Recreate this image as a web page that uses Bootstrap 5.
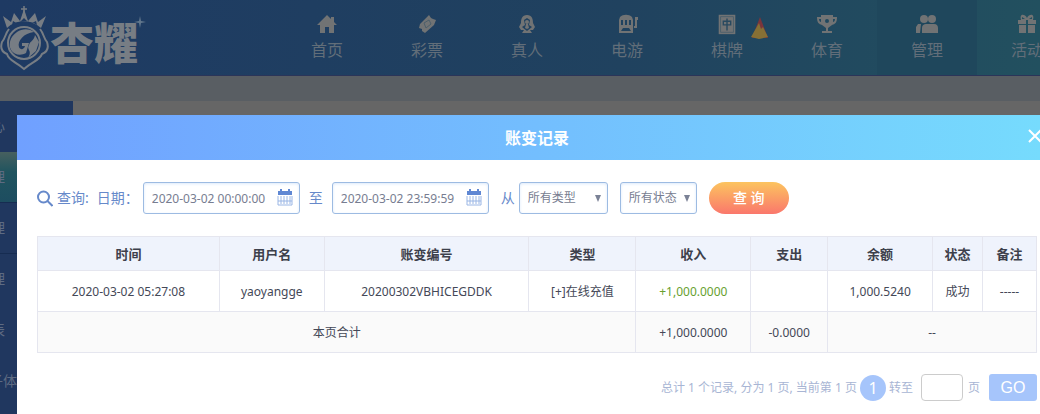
<!DOCTYPE html>
<html lang="zh-CN">
<head>
<meta charset="utf-8">
<meta name="viewport" content="width=device-width, initial-scale=1">
<title>账变记录</title>
<link href="https://cdn.jsdelivr.net/npm/bootstrap@5.3.0/dist/css/bootstrap.min.css" rel="stylesheet">
<style>
body{font-family:"Noto Sans","Noto Sans CJK SC",sans-serif;font-size:12px;line-height:20px;background:#666;color:#444857;min-height:100vh;overflow:hidden}
.site-head{height:76px;background:linear-gradient(90deg,#1e3a63,#20425f 60%,#22505f);border-bottom:1px solid #2b3559;overflow:hidden}
.brand{color:#777d84;width:277px;height:76px;text-decoration:none}
.brand .emblem{width:50px;height:68px;margin-top:4px}
.brand .spark{width:12px;height:12px;margin:16px 0 0 -4px}
.brand-name{font:900 44px/48px "Noto Sans CJK SC",sans-serif;margin-top:17px}
.site-nav{height:76px}
.site-nav a{width:100px;padding-top:13px;color:#626e79;font-size:16px;line-height:24px;text-decoration:none;position:relative}
.site-nav a.current{background:#1f475c}
.site-nav svg{width:24px;height:22px;fill:#717374;margin-bottom:3px}
.site-nav svg.flame{position:absolute;left:74px;top:17px;width:18px}
.strip{height:25px;background:#595e63}
.side{width:73px;background:#20375f;color:#5e6b82;font-size:14px}
.side a{height:51px;width:73px;color:inherit;text-decoration:none;border-bottom:1px solid #162c51;overflow:hidden}
.side a span{width:41px;margin-left:-36px;white-space:nowrap;text-align:right}
.side a.current{background:linear-gradient(#47605f,#20545f 40%,#1d4d60)}
.side a.plain{border-color:transparent}
.side a.wide span{width:53px}
.dialog-layer{position:absolute;inset:115px 0 0 17px;overflow:hidden}
.dialog-box{width:calc(100% + 17px);min-height:100%;background:#fff}
.dialog-head{height:45px;background:linear-gradient(90deg,#70a0ff,#76dcfd);color:#fff;position:relative}
.dialog-head h1{font-size:16px;line-height:24px;font-weight:700}
.dialog-head button{position:absolute;right:15px;top:14px;width:14px;height:14px;padding:0;border:0;background:none;line-height:0}
.query{padding:22px 20px 0;color:#6689ca;font-size:14px;height:76px}
.field{height:32px;border:1px solid #9dbbe2;border-radius:3px;background:#fff;box-shadow:inset 0 1px 3px #dceafb;color:#777d91}
.field input,.field select{border:0;background:none;color:inherit;font-size:12px;outline:0;appearance:none;padding:0 8px;height:30px}
.date-field{width:157px}
.date-field input{width:133px;padding-right:0}
.date-field svg{margin-bottom:2px}
.joint{margin:0 9px}
.pick select{width:100%}
.pick{position:relative}
.pick svg{position:absolute;right:6px;top:12px;pointer-events:none}
.type-pick{width:89px}.state-pick{width:77px}
.query .go-query{width:80px;height:32px;border:0;border-radius:16px;background:linear-gradient(#fcc45f,#fa776c);color:#fff;font-size:14px;font-weight:500;padding:0;white-space:pre}
.far{margin-left:12px}
.records{width:calc(100% - 40px);margin:0 20px;table-layout:fixed;border-collapse:collapse;text-align:center}
.records th,.records td{border:1px solid #e5e6ef;padding:2px 0 0;height:41px}
.records th{height:34px;font-size:13px;background:#eff3fc;color:#3d404b;font-weight:700;padding:0}
.records tfoot td{background:#fafafa}
.records .gain{color:#689f2f}
.pager{padding:21px 20px 12px;color:#a8b5d4}
.pager .page-now{width:26px;height:26px;margin:0 3px;border-radius:50%;background:#a6c5fb;color:#fff;font-size:16px;text-decoration:none}
.pager .unit{margin:0 9px 0 5px}
.pager input{width:42px;height:27px;border:1px solid #ccc;border-radius:4px;padding:0 4px}
.pager button{width:48px;height:27px;border:0;border-radius:3px;background:#a6c5fb;color:#fff;font:16px/20px "Liberation Sans",sans-serif;padding:0}
</style>
</head>
<body class="d-flex flex-column">
<header class="site-head d-flex">
  <a href="#" class="brand d-flex flex-shrink-0 align-items-start">
    <svg class="emblem" viewBox="0 0 50 68" fill="none" stroke="currentColor" stroke-width="2">
      <path d="M7 24 3 12l8 6 3-9 6 8 4-12 4 12 7-8 3 9 8-6-5 12c-10-9-25-9-34 0z" fill="currentColor" stroke="none"/>
      <path d="m12 21 1-4 5 3 6-6 6 6 6-3 1 4c-8-5-17-5-25 0z" fill="#1e3a63" stroke="none"/>
      <path d="M24 2v9m-3-6h6" stroke-width="1.5"/>
      <path d="M9 25c-4 5-3 8-7 13-2 6 0 10 5 12 2 7 8 7 17 15 9-8 15-8 18-15 5-2 7-6 5-12-4-5-3-8-7-13"/>
      <circle cx="24" cy="39" r="16" stroke-width="2"/>
      <path d="M34 28c-6-4-12-3-17 0-7 5-9 12-6 18 3 5 10 6 15 3l3-10h-7v3h3c-1 4-5 4-6 1-2-6 5-14 15-15z" fill="currentColor" stroke="none"/>
      <path d="m35 31 4 7-3 9-8 7c5-8-2-8 1-13 1-4 5-4 6-10z" fill="currentColor" stroke="none"/>
    </svg>
    <span class="brand-name">杏耀</span>
    <svg class="spark" viewBox="0 0 12 12"><path d="m6 0 1 5 5 1-5 1-1 5-1-5-5-1 5-1z" fill="#62778c"/></svg>
  </a>
  <nav class="site-nav d-flex flex-shrink-0 text-center">
    <a href="#" class="d-flex flex-column align-items-center"><svg viewBox="0 0 24 22"><path d="M12 2 2 12h3v8h5v-6h4v6h5v-8h3l-3-3V4h-3v2z"/></svg>首页</a>
    <a href="#" class="d-flex flex-column align-items-center"><svg viewBox="0 0 24 22"><path d="m14 2 2 3 2 1 3 1-2 5-9 8-3-2v-2l-3-1 1-4z"/><path d="m9 10 5-3 2 4-5 4z" fill="none" stroke="#4c5f6b"/></svg>彩票</a>
    <a href="#" class="d-flex flex-column align-items-center"><svg viewBox="0 0 24 22"><path d="M12 2c-5 0-6 4-6 8l-2 4 2 3h3l-2 3h10l-2-3h3l2-3-2-4c0-4-1-8-6-8zm0 3 3 2-1 5 3 2-5 4-5-4 3-2-1-5z" fill-rule="evenodd"/><circle cx="12" cy="9" r="2"/><path d="m11 11-1 4 2 1 2-1-1-4z"/></svg>真人</a>
    <a href="#" class="d-flex flex-column align-items-center"><svg viewBox="0 0 24 22"><path d="M5 4c3-3 9-3 12 0l1 3v13H4V7zm1 3v5h10V7zm2 8-2 3h10l-2-3z" fill-rule="evenodd"/><path d="M8 7h2v5H8zm4 0h2v5h-2zm8-3h3v3h-1v8h-3v-2h1z"/></svg>电游</a>
    <a href="#" class="d-flex flex-column align-items-center"><svg viewBox="0 0 26 22"><path d="M4 1h18v21H4z"/><path d="M6 3h14v17H6z" fill="none" stroke="#4c5f6b"/><path d="M9 8h8v4H9zm4-3v13" fill="none" stroke="#28495f" stroke-width="1.500"/></svg>棋牌<svg class="flame" viewBox="0 0 18 22"><path d="M9 0 1 21h16z" fill="#7b353b"/><path d="m8 6-8 14 8 2 9-2-5-10-2 2z" fill="#867035"/></svg></a>
    <a href="#" class="d-flex flex-column align-items-center"><svg viewBox="0 0 24 22"><path d="M6 2h12v2h4c0 6-2 7-5 8l-4 3v3h4v2H7v-2h4v-3l-4-3C4 11 2 10 2 4h4zM4 6c0 2 1 3 2 3V6zm14 0v3c1 0 2-1 2-3zm-6 0a2 2 0 1 0 0 4 2 2 0 0 0 0-4z" fill-rule="evenodd"/></svg>体育</a>
    <a href="#" class="current d-flex flex-column align-items-center"><svg viewBox="0 0 24 22"><circle cx="9" cy="6" r="4"/><circle cx="17" cy="6" r="4"/><path d="M1 20v-6l2-3h3l-1 9zm6 0v-5c0-3 2-4 4-4h8c3 0 4 2 4 4v5z"/></svg>管理</a>
    <a href="#" class="d-flex flex-column align-items-center"><svg viewBox="0 0 24 22"><path d="M3 7h3C4 0 10 1 12 5c2-4 8-5 6 2h3v4h-8V7h-2v4H3zm4-3v2h3zm10 0-3 2h3zM4 12h7v8H4zm9 0h7v8h-7z" fill-rule="evenodd"/></svg>活动</a>
  </nav>
</header>
<div class="strip"></div>
<aside class="side flex-grow-1">
  <a href="#" class="d-flex align-items-center plain"><span>中心</span></a>
  <a href="#" class="d-flex align-items-center current"><span>管理</span></a>
  <a href="#" class="d-flex align-items-center"><span>管理</span></a>
  <a href="#" class="d-flex align-items-center plain"><span>管理</span></a>
  <a href="#" class="d-flex align-items-center plain"><span>报表</span></a>
  <a href="#" class="d-flex align-items-center plain wide"><span>电子体</span></a>
</aside>

<div class="dialog-layer">
<section class="dialog-box" role="dialog" aria-labelledby="dialog-title">
  <div class="dialog-head d-flex align-items-center justify-content-center">
    <h1 id="dialog-title" class="m-0">账变记录</h1>
    <button type="button" aria-label="关闭"><svg width="14" height="14" viewBox="0 0 14 14" stroke="#fff" stroke-width="2"><path d="m1 1 12 12M13 1 1 13"/></svg></button>
  </div>
  <form class="query d-flex align-items-start">
    <div class="d-flex align-items-center">
      <svg width="16" height="17" viewBox="0 0 16 17" fill="none" stroke="currentColor" stroke-width="2" class="me-1"><circle cx="6.500" cy="7" r="5.500"/><path d="m10.500 11 5 5"/></svg>
      <span class="me-2">查询:</span><label for="from" class="me-1">日期：</label>
      <div class="field date-field d-flex align-items-center">
        <input id="from" type="text" value="2020-03-02 00:00:00">
        <svg width="16" height="18" viewBox="0 0 16 18"><path d="M1 3h2V1h2v2h6V1h2v2h2v4H1z" fill="#5f87d3"/><path d="M1 8v9h14V8M4 8v8m3-8v8m3-8v8m3-8v8M1 13h14" fill="none" stroke="#9ab6e5"/></svg>
      </div>
      <label for="to" class="joint">至</label>
      <div class="field date-field d-flex align-items-center">
        <input id="to" type="text" value="2020-03-02 23:59:59">
        <svg width="16" height="18" viewBox="0 0 16 18"><path d="M1 3h2V1h2v2h6V1h2v2h2v4H1z" fill="#5f87d3"/><path d="M1 8v9h14V8M4 8v8m3-8v8m3-8v8m3-8v8M1 13h14" fill="none" stroke="#9ab6e5"/></svg>
      </div>
      <label for="type" class="far me-1">从</label>
      <div class="field pick type-pick"><select id="type"><option>所有类型</option></select><svg width="6" height="7"><path d="M0 0h6L3 7z" fill="#7b8296"/></svg></div>
      <div class="field pick state-pick far"><select aria-label="状态"><option>所有状态</option></select><svg width="6" height="7"><path d="M0 0h6L3 7z" fill="#7b8296"/></svg></div>
      <button type="button" class="go-query far">查 询</button>
    </div>
  </form>
  <table class="records">
    <colgroup><col style="width:18.2%"><col style="width:10.5%"><col style="width:20.5%"><col style="width:10.7%"><col style="width:11.5%"><col style="width:7.7%"><col style="width:10.5%"><col style="width:5%"><col></colgroup>
    <thead><tr><th>时间</th><th>用户名</th><th>账变编号</th><th>类型</th><th>收入</th><th>支出</th><th>余额</th><th>状态</th><th>备注</th></tr></thead>
    <tbody><tr><td>2020-03-02 05:27:08</td><td>yaoyangge</td><td>20200302VBHICEGDDK</td><td>[+]在线充值</td><td class="gain">+1,000.0000</td><td></td><td>1,000.5240</td><td>成功</td><td>-----</td></tr></tbody>
    <tfoot><tr><td colspan="4">本页合计</td><td>+1,000.0000</td><td>-0.0000</td><td colspan="3">--</td></tr></tfoot>
  </table>
  <form class="pager d-flex align-items-center justify-content-end">
    <span>总计 1 个记录, 分为 1 页, 当前第 1 页</span>
    <a href="#" class="page-now d-flex align-items-center justify-content-center">1</a>
    <label for="page" class="me-2">转至</label><input id="page" type="text"><span class="unit">页</span>
    <button type="button">GO</button>
  </form>
</section>
</div>
<script src="https://cdn.jsdelivr.net/npm/bootstrap@5.3.0/dist/js/bootstrap.bundle.min.js"></script>
</body>
</html>
